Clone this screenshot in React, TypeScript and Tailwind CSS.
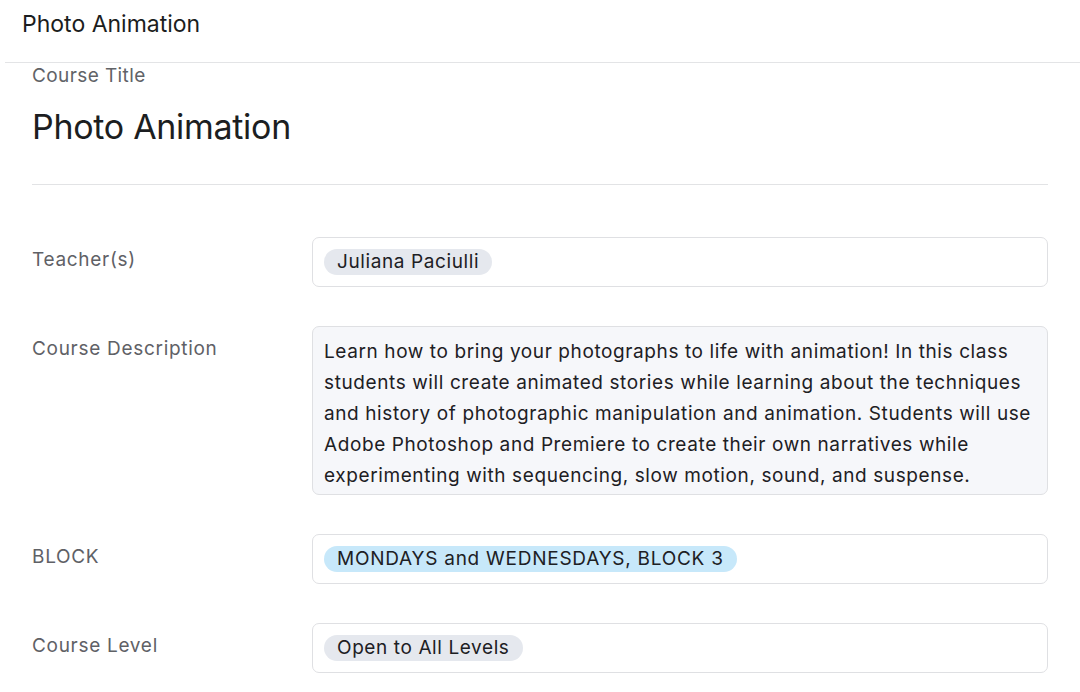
const font = { fontFamily: 'Inter, "Noto Sans", sans-serif' };

const description = [
  'Learn how to bring your photographs to life with animation! In this class',
  'students will create animated stories while learning about the techniques',
  'and history of photographic manipulation and animation. Students will use',
  'Adobe Photoshop and Premiere to create their own narratives while',
  'experimenting with sequencing, slow motion, sound, and suspense.',
];

function Pill({ children, blue }: { children: React.ReactNode; blue?: boolean }) {
  return (
    <span
      className={
        blue
          ? 'inline-flex h-[26px] items-center rounded-full bg-[#c7e8fa] px-[13px] text-[19px] tracking-[0.75px] text-[#1d2024]'
          : 'inline-flex h-[26px] items-center rounded-full bg-[#e5e8ee] px-[13px] text-[19px] tracking-[0.6px] text-[#1d2024]'
      }
    >
      {children}
    </span>
  );
}

function Row({ label, children }: { label: string; children: React.ReactNode }) {
  return (
    <div className="flex items-start">
      <div className="w-[280px] shrink-0 pt-[9px] text-[19px] leading-[28px] tracking-[0.7px] text-[#5f6166]">{label}</div>
      <div className="flex-1">{children}</div>
    </div>
  );
}

export default function App() {
  return (
    <div className="h-[692px] w-[1080px] overflow-hidden bg-white" style={font}>
      <header className="ml-[5px] flex h-[63px] items-start border-b border-[#e3e4e6] pl-[17px] pt-[9px]">
        <h1 className="text-[23px] leading-[30px] text-[#1b1d20]">Photo Animation</h1>
      </header>

      <main className="px-[32px]">
        <div className="pt-[1px] text-[19px] leading-[24px] tracking-[0.4px] text-[#616367]">Course Title</div>
        <h2 className="mt-[19px] text-[34px] leading-[40px] tracking-[-0.3px] text-[#1c1e21]">Photo Animation</h2>
        <hr className="mt-[37px] border-[#e2e3e5]" />

        <div className="mt-[52px] flex flex-col gap-[39px]">
          <Row label="Teacher(s)">
            <div className="flex h-[50px] items-center rounded-[7px] border border-[#dfe0e3] px-[11px]">
              <Pill>Juliana Paciulli</Pill>
            </div>
          </Row>

          <Row label="Course Description">
            <div className="rounded-[7px] border border-[#dfe0e3] bg-[#f6f7fa] px-[11px] pb-[3px] pt-[9px] text-[19px] leading-[31px] tracking-[0.6px] text-[#1d2024]">
              {description.map((line) => (
                <div key={line} className="whitespace-nowrap">{line}</div>
              ))}
            </div>
          </Row>

          <Row label="BLOCK">
            <div className="flex h-[50px] items-center rounded-[7px] border border-[#dfe0e3] px-[11px]">
              <Pill blue>MONDAYS and WEDNESDAYS, BLOCK 3</Pill>
            </div>
          </Row>

          <Row label="Course Level">
            <div className="flex h-[50px] items-center rounded-[7px] border border-[#dfe0e3] px-[11px]">
              <Pill>Open to All Levels</Pill>
            </div>
          </Row>
        </div>
      </main>
    </div>
  );
}
